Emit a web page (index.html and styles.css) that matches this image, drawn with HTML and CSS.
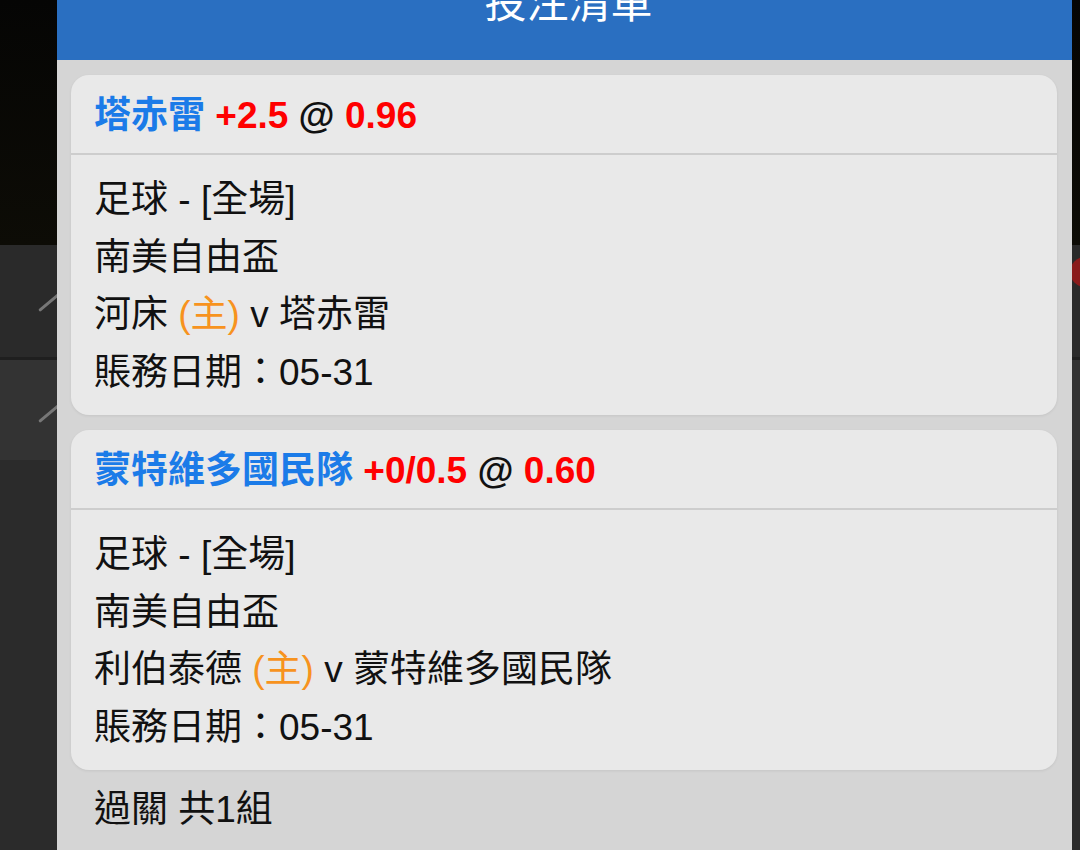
FILE: index.html
```html
<!DOCTYPE html>
<html lang="zh-Hant">
<head>
    <meta charset="UTF-8">
    <meta name="viewport" content="width=device-width, initial-scale=1.0">
    <title>投注清單</title>
    <link rel="stylesheet" href="styles.css">
</head>
<body>
    <div class="backdrop">
        <div class="bg-video"></div>
        <div class="bg-row bg-row-a"><span class="stroke"></span><span class="live-dot"></span></div>
        <div class="bg-row bg-row-b"><span class="stroke"></span></div>
        <div class="bg-rest"></div>
    </div>

    <div class="sheet">
        <div class="sheet-header">
            <h2>投注清單</h2>
        </div>
        <div class="sheet-body">
            <div class="bet-card">
                <div class="bet-title">
                    <span class="team">塔赤雷</span>
                    <span class="odds">+2.5</span>
                    <span class="at">@</span>
                    <span class="odds">0.96</span>
                </div>
                <div class="bet-info">
                    <div>足球 - [全場]</div>
                    <div>南美自由盃</div>
                    <div>河床 <span class="home">(主)</span> v 塔赤雷</div>
                    <div>賬務日期：05-31</div>
                </div>
            </div>
            <div class="bet-card">
                <div class="bet-title">
                    <span class="team">蒙特維多國民隊</span>
                    <span class="odds">+0/0.5</span>
                    <span class="at">@</span>
                    <span class="odds">0.60</span>
                </div>
                <div class="bet-info">
                    <div>足球 - [全場]</div>
                    <div>南美自由盃</div>
                    <div>利伯泰德 <span class="home">(主)</span> v 蒙特維多國民隊</div>
                    <div>賬務日期：05-31</div>
                </div>
            </div>
            <div class="parlay">過關 共1組</div>
        </div>
    </div>
</body>
</html>
```

FILE: styles.css
```css
body {
    margin: 0;
    padding: 0;
    height: 850px;
    overflow: hidden;
    background: #2b2b2b;
    font-family: "Liberation Sans", "Noto Sans CJK TC", sans-serif;
}
.backdrop {
    display: flex;
    flex-direction: column;
    height: 100%;
}
.bg-video {
    height: 245px;
    background: linear-gradient(to bottom, #050504, #0d0c06); /* dark video area */
}
.bg-row {
    position: relative;
    box-sizing: border-box;
}
.bg-row-a {
    height: 115px;
    background: #2a2a2a;
    border-bottom: 3px solid #1f1f1f;
}
.bg-row-b {
    height: 100px;
    background: #333;
}
.bg-rest {
    flex: 1;
    background: #2b2b2b;
}
.stroke {
    position: absolute;
    left: 36px;
    top: 56px;
    width: 26px;
    height: 3px;
    background: #777;
    border-radius: 2px;
    transform: rotate(-40deg);
}
.bg-row-b .stroke {
    top: 52px;
}
.live-dot {
    position: absolute;
    left: 1070px;
    top: 12px;
    width: 30px;
    height: 30px;
    border-radius: 50%;
    background: #8a1c1c;
}

/* sheet overlay */
.sheet {
    position: absolute;
    top: 0;
    left: 57px;
    width: 1015px;
    bottom: 0;
    background: #d5d5d5;
}
.sheet-header {
    height: 60px;
    background: #2a6fc1;
    overflow: hidden;
}
.sheet-header h2 {
    margin: -17px 0 0;
    color: #fff;
    font-size: 42px;
    font-weight: normal;
    line-height: 42px;
    text-align: center;
    padding-left: 8px;
}
.sheet-body {
    display: flex;
    flex-direction: column;
    gap: 15px;
    padding: 15px 15px 0 14px;
}
.bet-card {
    background: #e9e9e9;
    border-radius: 18px;
    box-shadow: 0 1px 3px rgba(0, 0, 0, 0.08);
}
.bet-title {
    padding: 18px 23px 14px;
    line-height: 46px;
    font-size: 37px;
    font-weight: bold;
    border-bottom: 2px solid #cdcdcd;
}
.team {
    color: #1b7be8;
}
.odds {
    color: #f00;
}
.at {
    color: #111;
}
.bet-info {
    padding: 16px 23px 14px;
    font-size: 37px;
    line-height: 57.5px;
    color: #111;
}
.home {
    color: #f7931e;
}
.parlay {
    margin-top: -4px;
    padding-left: 23px;
    font-size: 37px;
    line-height: 57.5px;
    color: #111;
}
```
